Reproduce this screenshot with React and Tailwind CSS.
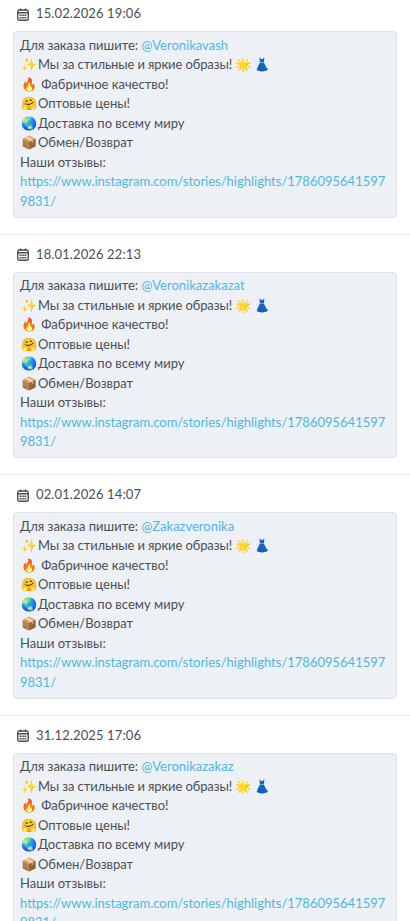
const posts = [
  { date: "15.02.2026 19:06", nick: "@Veronikavash" },
  { date: "18.01.2026 22:13", nick: "@Veronikazakazat" },
  { date: "02.01.2026 14:07", nick: "@Zakazveronika" },
  { date: "31.12.2025 17:06", nick: "@Veronikazakaz" },
];

const CalendarIcon = () => (
  <svg className="ml-[4px] mr-[7px] h-[13px] w-[12px]" viewBox="0 0 12 13" fill="none" stroke="currentColor">
    <rect x="0.75" y="2" width="10.5" height="10.25" rx="1.5" strokeWidth="1.4" />
    <path d="M1 4.75h10M3.5 0.5v2.5M8.5 0.5v2.5" strokeWidth="1.4" />
    <path d="M2.5 7.25h7M2.5 9.75h7" strokeWidth="1.3" strokeDasharray="1.4 0.4" />
  </svg>
);

const Emoji = ({ children }) => (
  <span className="inline-block w-[18px] text-center">{children}</span>
);

const Post = ({ date, nick }) => (
  <div className="border-b border-[#eef0f4] px-[13px] pt-[6px] pb-[16px] first:pt-0">
    <div className="flex h-[31px] items-center pb-[3px] text-[13px] tracking-[0.12px] text-[#495057]">
      <CalendarIcon />
      {date}
    </div>
    <div className="rounded-[4px] border border-[#dee2e6] bg-[#edf0f5] px-[6px] pt-[3.5px] pb-[5.5px] text-[13px] leading-[19.5px] text-[#495057] break-words">
      <div>
        Для заказа пишите: <a className="text-[#4fb8e0]">{nick}</a>
      </div>
      <div className="tracking-[-0.12px]"><Emoji>✨</Emoji>Мы за стильные и яркие образы! 🌟 👗</div>
      <div><Emoji>🔥</Emoji> Фабричное качество!</div>
      <div><Emoji>🤗</Emoji>Оптовые цены!</div>
      <div><Emoji>🌏</Emoji>Доставка по всему миру</div>
      <div><Emoji>📦</Emoji>Обмен/Возврат</div>
      <div>Наши отзывы:</div>
      <a className="text-[#4fb8e0]">https://www.instagram.com/stories/highlights/17860956415979831/</a>
    </div>
  </div>
);

export default function App() {
  return (
    <div className="h-[921px] overflow-hidden bg-white font-['Lato',sans-serif]">
      {posts.map((p) => (
        <Post key={p.date} {...p} />
      ))}
    </div>
  );
}
